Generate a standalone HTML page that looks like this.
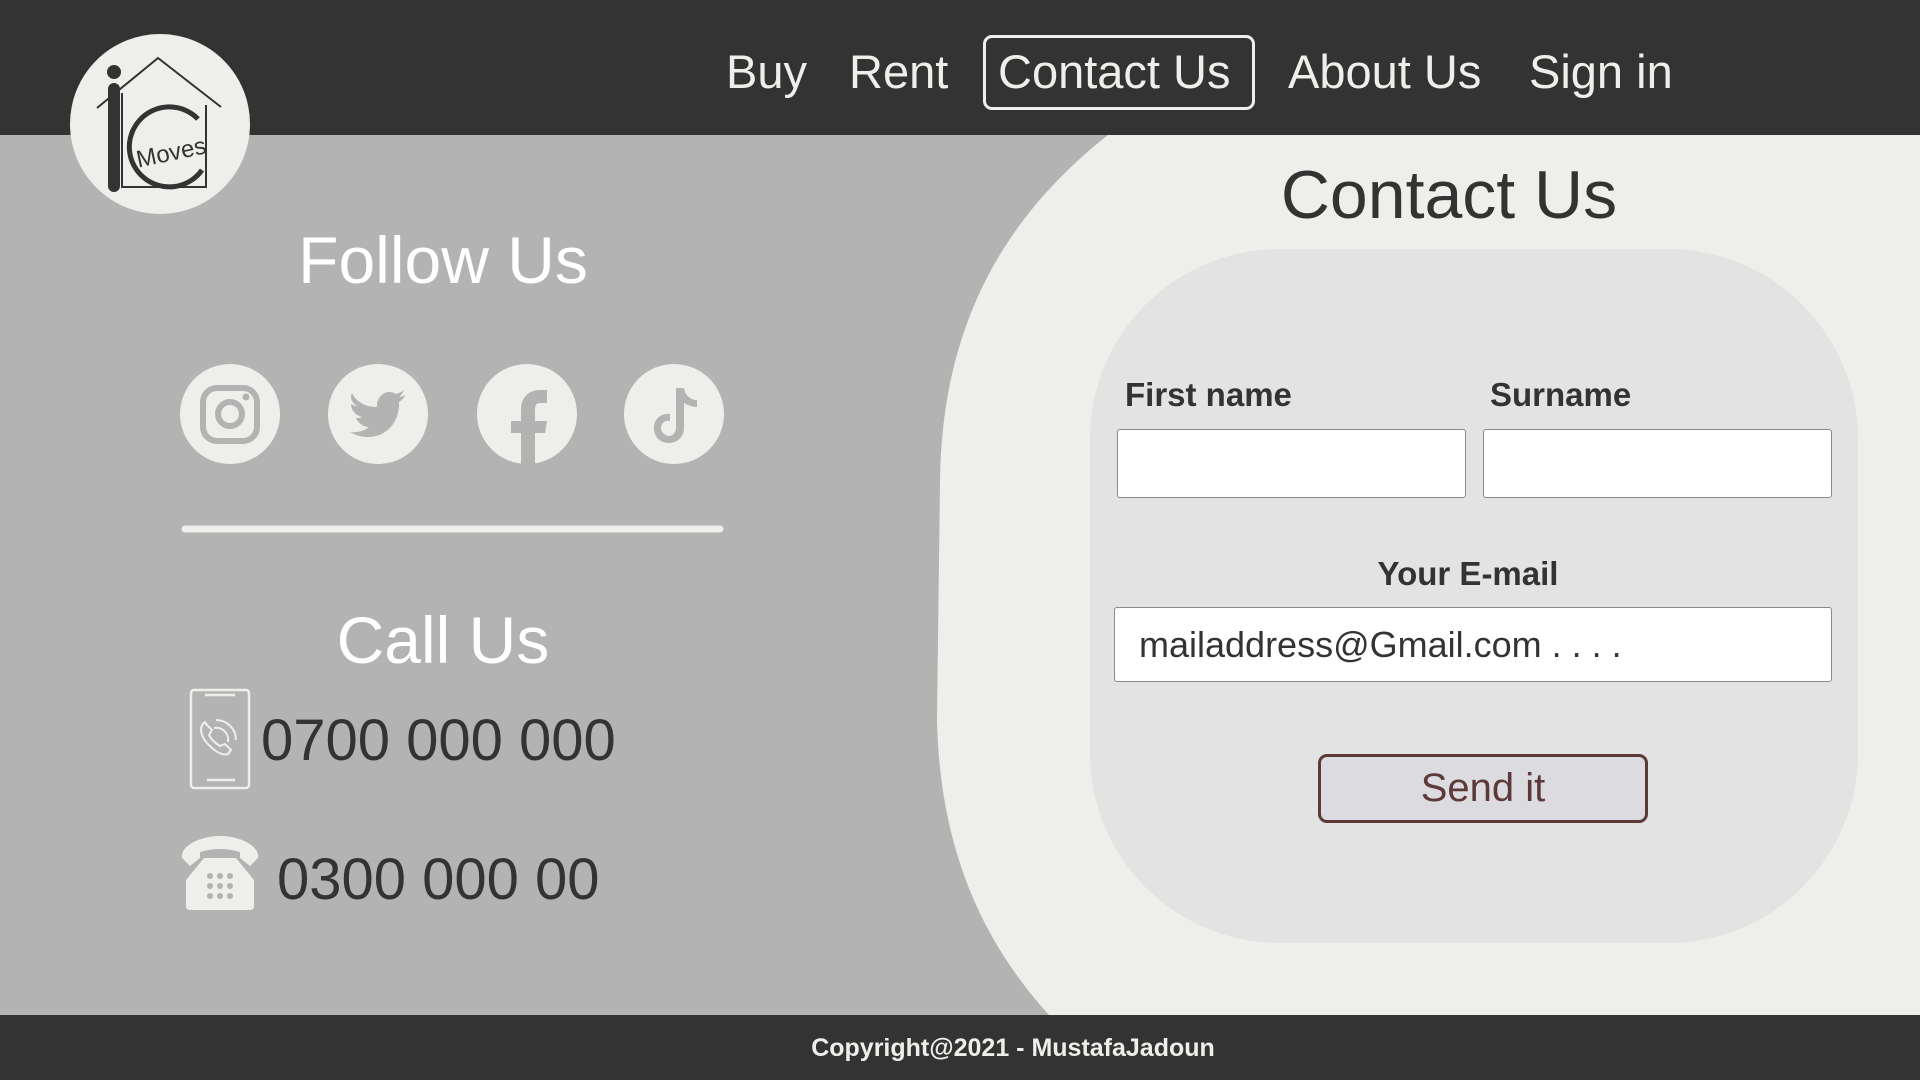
<!DOCTYPE html>
<html><head><meta charset="utf-8"><style>
*{margin:0;padding:0;box-sizing:border-box}
body{width:1920px;height:1080px;overflow:hidden;background:#b3b3b3;font-family:"Liberation Sans",sans-serif;position:relative}
.abs{position:absolute}
header{position:absolute;left:0;top:0;width:1920px;height:135px;background:#333333}
.nav{position:absolute;color:#eeeeea;font-size:47px;top:44px;line-height:56px}
footer{position:absolute;left:0;top:1015px;width:1920px;height:65px;background:#333333}
.ctr{position:absolute;text-align:center;transform:translateX(-50%);white-space:nowrap}
.circ{position:absolute;width:100px;height:100px;border-radius:50%;background:#eeeeea}
.inp{position:absolute;background:#fff;border:1.5px solid #8a8a8a;border-radius:3px}
.lbl{position:absolute;font-weight:bold;font-size:33px;color:#333}
</style></head><body>
<svg class="abs" style="left:0;top:0" width="1920" height="1080">
<path d="M1108 135 C1000 220 942 330 940 480 L937 720 C940 860 990 950 1049 1015 L1920 1015 L1920 135 Z" fill="#eeeeea"/>
</svg>
<header></header>
<div class="abs" style="left:70px;top:34px;width:180px;height:180px;border-radius:50%;background:#eeeeea"></div>
<svg class="abs" style="left:70px;top:34px" width="180" height="180">
<polyline points="27,74 88,24 151,73" fill="none" stroke="#333" stroke-width="2"/>
<polyline points="52,59 52,153 136,153 136,71" fill="none" stroke="#333" stroke-width="2"/>
<circle cx="44" cy="38" r="7" fill="#333"/>
<rect x="38" y="49" width="12" height="109" rx="6" fill="#333"/>
<path d="M128 85 A40 40 0 1 0 132 136" fill="none" stroke="#333" stroke-width="5"/>
<text x="66" y="128" font-size="24" fill="#333" transform="rotate(-12 94 120)" font-family="Liberation Sans Narrow, Liberation Sans, sans-serif">Moves</text>
</svg>
<div class="nav" style="left:726px">Buy</div>
<div class="nav" style="left:849px">Rent</div>
<div class="abs" style="left:983px;top:35px;width:272px;height:75px;border:3.5px solid #eeeeea;border-radius:9px"></div>
<div class="nav" style="left:998px">Contact Us</div>
<div class="nav" style="left:1288px">About Us</div>
<div class="nav" style="left:1529px">Sign in</div>

<div class="ctr" style="left:443px;top:222px;font-size:66px;color:#fff">Follow Us</div>
<div class="circ" style="left:180px;top:364px"></div>
<div class="circ" style="left:328px;top:364px"></div>
<div class="circ" style="left:477px;top:364px"></div>
<div class="circ" style="left:624px;top:364px"></div>
<svg class="abs" style="left:0;top:0" width="900" height="1000">
<rect x="203" y="388" width="54" height="53" rx="14" fill="none" stroke="#b3b3b3" stroke-width="6"/>
<circle cx="230" cy="414" r="12" fill="none" stroke="#b3b3b3" stroke-width="6"/>
<circle cx="246" cy="397" r="3.5" fill="#b3b3b3"/>
<path d="M352 393 C356 402 366 407 377 407 C376 396 387 388 396 394 C399 393 402 392 404 390 C403 393 401 395 399 397 C401 397 403 396 405 395 C404 398 402 400 399 402 C400 420 388 437 368 437 C361 437 355 435 350 432 C357 433 364 431 369 427 C363 427 358 423 356 418 C358 418 360 418 362 417 C355 415 351 410 351 404 C353 405 355 406 357 406 C351 402 350 397 352 393Z" fill="#b3b3b3"/>
<path d="M521 464 L521 433 L511 433 L511 421 L521 421 L521 410 C521 398 528 390 540 390 L547 390 L547 403 L541 403 C536 403 535 405 535 410 L535 421 L547 421 L545 433 L535 433 L535 464 Z" fill="#b3b3b3"/>
<path d="M676 388 L684 388 C685 395 690 400 697 400 L697 407 C692 407 688 405 684 403 L684 428 C684 437 677 443 669 443 C660 443 654 437 654 428 C654 419 661 413 670 414 L670 421 C665 420 661 423 661 428 C661 432 665 436 669 436 C673 436 676 432 676 428 Z" fill="#b3b3b3"/>
<line x1="185" y1="529" x2="720" y2="529" stroke="#eeeeea" stroke-width="7" stroke-linecap="round"/>
<rect x="191" y="690" width="58" height="98" rx="3" fill="none" stroke="#eeeeea" stroke-width="2.5"/>
<line x1="205" y1="695" x2="235" y2="695" stroke="#eeeeea" stroke-width="2.5"/>
<line x1="207" y1="780" x2="235" y2="780" stroke="#eeeeea" stroke-width="2.5"/>
<path d="M205 722 C199 726 200 735 207 743 C214 751 222 756 228 754 L231 750 L225 744 L220 746 C215 743 211 739 209 735 L212 730 L206 724Z" fill="none" stroke="#eeeeea" stroke-width="2"/>
<path d="M216 720 A20 20 0 0 1 236 740 M214 728 A12 12 0 0 1 228 742" fill="none" stroke="#eeeeea" stroke-width="2"/>
<path d="M182 858 C180 846 200 836 220 836 C240 836 260 846 258 858 L250 866 L240 858 L240 852 C227 848 213 848 200 852 L200 858 L190 866Z" fill="#eeeeea"/>
<path d="M204 858 L236 858 L254 880 L254 906 C254 909 252 910 250 910 L190 910 C188 910 186 909 186 906 L186 880Z" fill="#eeeeea"/>
<g fill="#b3b3b3"><circle cx="210" cy="876" r="3"/><circle cx="220" cy="876" r="3"/><circle cx="230" cy="876" r="3"/><circle cx="210" cy="886" r="3"/><circle cx="220" cy="886" r="3"/><circle cx="230" cy="886" r="3"/><circle cx="210" cy="896" r="3"/><circle cx="220" cy="896" r="3"/><circle cx="230" cy="896" r="3"/></g>
</svg>
<div class="ctr" style="left:443px;top:602px;font-size:66px;color:#fff">Call Us</div>
<div class="abs" style="left:261px;top:707px;font-size:58px;color:#333">0700 000 000</div>
<div class="abs" style="left:277px;top:846px;font-size:58px;color:#333">0300 000 00</div>

<div class="ctr" style="left:1449px;top:156px;font-size:68px;color:#333">Contact Us</div>
<div class="abs" style="left:1090px;top:249px;width:768px;height:694px;border-radius:190px;background:#e3e3e3"></div>
<div class="lbl" style="left:1125px;top:376px">First name</div>
<div class="lbl" style="left:1490px;top:376px">Surname</div>
<div class="inp" style="left:1117px;top:429px;width:349px;height:69px"></div>
<div class="inp" style="left:1483px;top:429px;width:349px;height:69px"></div>
<div class="lbl ctr" style="left:1468px;top:555px">Your E-mail</div>
<div class="inp" style="left:1114px;top:607px;width:718px;height:75px"></div>
<div class="abs" style="left:1139px;top:624px;font-size:36px;color:#333">mailaddress@Gmail.com . . . .</div>
<div class="abs" style="left:1318px;top:754px;width:330px;height:69px;background:#dcdbe0;border:3.5px solid #5c3a37;border-radius:9px;color:#5c3a37;font-size:40px;text-align:center;line-height:62px">Send it</div>
<footer></footer>
<div class="ctr" style="left:1013px;top:1033px;color:#eeeeea;font-weight:bold;font-size:25px;line-height:30px">Copyright@2021 - MustafaJadoun</div>
</body></html>
